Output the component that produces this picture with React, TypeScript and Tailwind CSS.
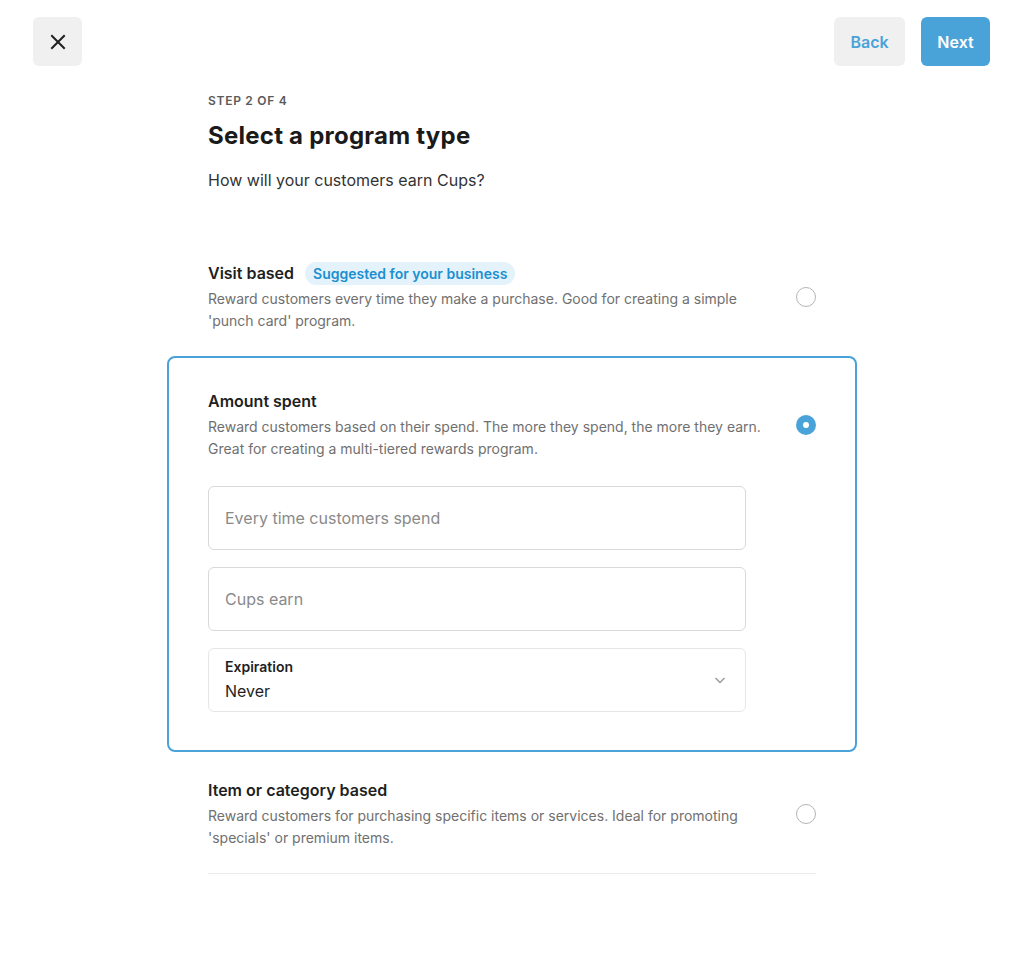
import React from "react";

function Radio({ checked }: { checked?: boolean }) {
  if (checked) {
    return (
      <div className="w-5 h-5 rounded-full bg-[#4aa3d8] flex items-center justify-center shrink-0">
        <div className="w-[6px] h-[6px] rounded-full bg-white" />
      </div>
    );
  }
  return <div className="w-5 h-5 rounded-full border-[1.5px] border-[#b5b5b5] bg-white shrink-0" />;
}

export default function App() {
  return (
    <div
      className="min-h-[972px] bg-white text-[#1f1f1f]"
      style={{ fontFamily: "Inter, 'Noto Sans', sans-serif" }}
    >
      <div className="flex items-center justify-between pl-[33px] pr-8 pt-[17px]">
        <button className="w-[49px] h-[49px] rounded-md bg-[#f0f0f0] flex items-center justify-center">
          <svg width="16" height="16" viewBox="0 0 16 16" fill="none">
            <path d="M2 2L14 14M14 2L2 14" stroke="#1f1f1f" strokeWidth="2" strokeLinecap="square" />
          </svg>
        </button>
        <div className="flex gap-4">
          <button className="h-[49px] w-[71px] rounded-md bg-[#f0f0f0] text-[#4aa3d8] text-[16px] font-semibold">
            Back
          </button>
          <button className="h-[49px] w-[69px] rounded-md bg-[#4aa3d8] text-white text-[16px] font-semibold">
            Next
          </button>
        </div>
      </div>

      <div className="w-[608px] ml-[208px]">
        <div className="mt-[27px] text-[12px] leading-4 font-semibold tracking-[0.06em] text-[#5a5a5a]">
          STEP 2 OF 4
        </div>
        <h1 className="mt-[11px] text-[24px] leading-8 font-bold text-[#1a1a1a] tracking-[0.01em]">
          Select a program type
        </h1>
        <p className="mt-4 text-[16px] leading-6 text-[#333]">How will your customers earn Cups?</p>

        <div className="mt-[45px]">
          <div className="flex items-center justify-between py-6">
            <div>
              <div className="flex items-center gap-[11px] h-6">
                <span className="text-[16px] font-semibold text-[#1f1f1f]">Visit based</span>
                <span className="rounded-full bg-[#e3f2fb] text-[#1c8fd0] text-[14px] font-semibold px-2 h-[23px] flex items-center">
                  Suggested for your business
                </span>
              </div>
              <p className="mt-[3px] text-[14px] leading-[22px] text-[#707070] w-[556px]">
                Reward customers every time they make a purchase. Good for creating a simple 'punch card' program.
              </p>
            </div>
            <Radio />
          </div>

          <div className="-mx-[41px] border-2 border-[#4aa3d8] rounded-lg px-[39px] pt-[31px] pb-[38px]">
            <div className="flex items-center justify-between">
              <div>
                <div className="text-[16px] leading-6 font-semibold text-[#1f1f1f]">Amount spent</div>
                <p className="mt-[3px] text-[14px] leading-[22px] text-[#707070] w-[556px]">
                  Reward customers based on their spend. The more they spend, the more they earn. Great for creating a
                  multi-tiered rewards program.
                </p>
              </div>
              <Radio checked />
            </div>

            <div className="mt-[26px] w-[538px] flex flex-col gap-[17px]">
              <div className="h-16 rounded-md border border-[#d9d9d9] flex items-center px-4">
                <span className="text-[16px] text-[#8a8a8a]">Every time customers spend</span>
              </div>
              <div className="h-16 rounded-md border border-[#d9d9d9] flex items-center px-4">
                <span className="text-[16px] text-[#8a8a8a]">Cups earn</span>
              </div>
              <div className="h-16 rounded-md border border-[#e6e6e6] flex items-center justify-between px-4">
                <div className="flex flex-col gap-[2px]">
                  <span className="text-[14px] leading-5 font-semibold text-[#1f1f1f]">Expiration</span>
                  <span className="text-[16px] leading-6 text-[#1f1f1f]">Never</span>
                </div>
                <svg width="14" height="14" viewBox="0 0 14 14" fill="none" className="mr-[2px]">
                  <path d="M2.5 5L7 9.5L11.5 5" stroke="#9a9a9a" strokeWidth="1.4" />
                </svg>
              </div>
            </div>
          </div>

          <div className="flex items-center justify-between pt-[26px] pb-6 border-b border-[#ebebeb]">
            <div>
              <div className="text-[16px] leading-6 font-semibold text-[#1f1f1f]">Item or category based</div>
              <p className="mt-[3px] text-[14px] leading-[22px] text-[#707070] w-[556px]">
                Reward customers for purchasing specific items or services. Ideal for promoting 'specials' or premium
                items.
              </p>
            </div>
            <Radio />
          </div>
        </div>
      </div>
    </div>
  );
}
